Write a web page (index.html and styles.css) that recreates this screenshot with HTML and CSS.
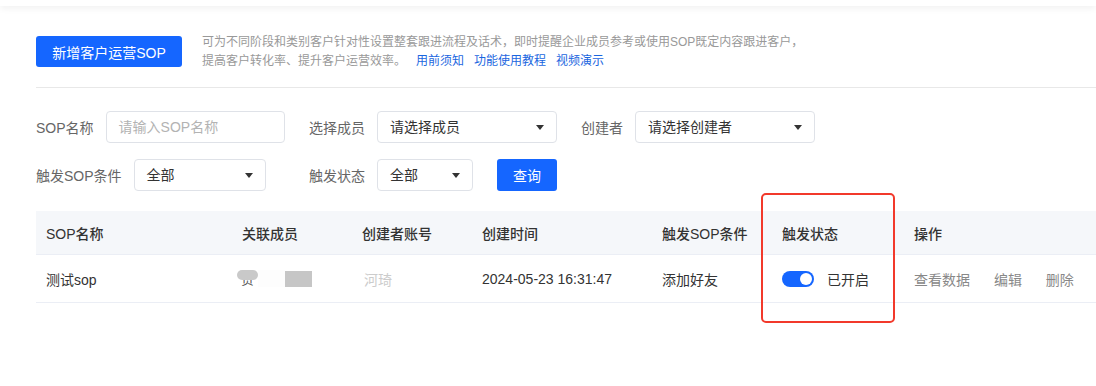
FILE: index.html
```html
<!DOCTYPE html>
<html lang="zh-CN">
<head>
    <meta charset="UTF-8">
    <meta name="viewport" content="width=device-width, initial-scale=1.0">
    <title>客户运营SOP</title>
    <link rel="stylesheet" href="styles.css">
</head>
<body>
    <div class="topbar"></div>

    <div class="page">
        <div class="intro">
            <button class="btn btn-primary btn-add" type="button">新增客户运营SOP</button>
            <div class="intro-desc">
                <div>可为不同阶段和类别客户针对性设置整套跟进流程及话术，即时提醒企业成员参考或使用SOP既定内容跟进客户，</div>
                <div>提高客户转化率、提升客户运营效率。<a href="#" class="link">用前须知</a><a href="#" class="link">功能使用教程</a><a href="#" class="link">视频演示</a></div>
            </div>
        </div>

        <form class="filters">
            <div class="filter-item">
                <label>SOP名称</label>
                <div class="field field-name placeholder">请输入SOP名称</div>
            </div>
            <div class="filter-item">
                <label>选择成员</label>
                <div class="field field-select field-wide">请选择成员<span class="caret"></span></div>
            </div>
            <div class="filter-item">
                <label>创建者</label>
                <div class="field field-select field-wide">请选择创建者<span class="caret"></span></div>
            </div>

            <div class="filter-item">
                <label>触发SOP条件</label>
                <div class="field field-select field-cond">全部<span class="caret"></span></div>
            </div>
            <div class="filter-item">
                <label>触发状态</label>
                <div class="field field-select field-status">全部<span class="caret"></span></div>
                <button class="btn btn-primary btn-query" type="button">查询</button>
            </div>
        </form>

        <div class="table-wrap">
            <table class="sop-table">
                <thead>
                    <tr>
                        <th class="col-name">SOP名称</th>
                        <th class="col-member">关联成员</th>
                        <th class="col-creator">创建者账号</th>
                        <th class="col-time">创建时间</th>
                        <th class="col-cond">触发SOP条件</th>
                        <th class="col-status">触发状态</th>
                        <th>操作</th>
                    </tr>
                </thead>
                <tbody>
                    <tr>
                        <td>测试sop</td>
                        <td>
                            <span class="redact">
                                <span class="redact-char">贺</span><span class="redact-pill"></span>
                            </span><span class="redact-gap"></span><span class="redact-block"></span>
                        </td>
                        <td><span class="faint">河琦</span></td>
                        <td>2024-05-23 16:31:47</td>
                        <td>添加好友</td>
                        <td>
                            <span class="switch is-on"><span class="switch-knob"></span></span>
                            <span class="switch-text">已开启</span>
                        </td>
                        <td class="actions">
                            <a href="#">查看数据</a>
                            <a href="#">编辑</a>
                            <a href="#">删除</a>
                        </td>
                    </tr>
                </tbody>
            </table>
            <!-- 标注框 -->
            <div class="mark-box"></div>
        </div>
    </div>
</body>
</html>
```

FILE: styles.css
```css
body {
    margin: 0;
    font-family: "Liberation Sans", "Noto Sans CJK SC", sans-serif;
    font-size: 14px;
    color: #333;
    background: #fff;
}
a {
    text-decoration: none;
}
.topbar {
    height: 6px;
    background: #fff;
    box-shadow: 0 2px 7px rgba(0, 0, 0, 0.07);
}
.page {
    padding-left: 36px;
    padding-bottom: 84px;
}

/* 顶部说明 */
.intro {
    display: flex;
    align-items: center;
    height: 82px;
    border-bottom: 1px solid #e8e8e8;
    box-sizing: border-box;
    padding-top: 10px;
}
.btn {
    border: none;
    border-radius: 3px;
    font-family: inherit;
    font-size: 14px;
    cursor: pointer;
}
.btn-primary {
    background: #1566ff;
    color: #fff;
}
.btn-add {
    width: 146px;
    height: 31px;
    padding: 0;
    flex-shrink: 0;
}
.intro-desc {
    margin-left: 20px;
    font-size: 12px;
    line-height: 19px;
    color: #999;
}
.link {
    color: #1a66e0;
    margin-left: 10px;
}

/* 筛选 */
.filters {
    display: grid;
    grid-template-columns: 249px 248px auto;
    column-gap: 24px;
    row-gap: 16px;
    margin: 23px 0 0;
}
.filter-item {
    display: flex;
    align-items: center;
    height: 32px;
}
.filter-item label {
    color: #666;
    margin-right: 12px;
    white-space: nowrap;
}
.field {
    position: relative;
    height: 32px;
    line-height: 30px;
    box-sizing: border-box;
    border: 1px solid #dfe2e8;
    border-radius: 4px;
    padding: 0 12px;
    color: #333;
    background: #fff;
}
.placeholder {
    color: #b3b3b3;
}
.field-name {
    width: 180px;
}
.field-wide {
    width: 180px;
}
.field-cond {
    width: 132px;
}
.field-status {
    width: 96px;
}
.caret {
    position: absolute;
    right: 12px;
    top: 13px;
    width: 0;
    height: 0;
    border-left: 4px solid transparent;
    border-right: 4px solid transparent;
    border-top: 5px solid #333;
}
.btn-query {
    width: 60px;
    height: 32px;
    margin-left: 24px;
}

/* 表格 */
.table-wrap {
    position: relative;
    margin-top: 20px;
}
.sop-table {
    width: 100%;
    border-collapse: collapse;
    table-layout: fixed;
}
.sop-table th,
.sop-table td {
    text-align: left;
    padding: 0 10px;
    border-bottom: 1px solid #ebeef5;
    white-space: nowrap;
}
.sop-table th {
    height: 43px;
    background: #f5f7fa;
    font-weight: 500;
    color: #333;
}
.sop-table td {
    height: 47px;
    color: #333;
}
.col-name { width: 176px; }
.col-member { width: 100px; }
.col-creator { width: 100px; }
.col-time { width: 160px; }
.col-cond { width: 100px; }
.col-status { width: 112px; }

/* 打码 */
.redact {
    position: relative;
    display: inline-block;
    vertical-align: middle;
    margin-left: -5px;
    width: 21px;
    height: 17px;
}
.redact-char {
    display: block;
    padding-left: 4px;
    font-size: 13px;
    line-height: 19px;
    color: #555;
}
.redact-pill {
    position: absolute;
    left: 0;
    top: 0;
    width: 21px;
    height: 10px;
    border-radius: 5px;
    background: #c9c9c9;
}
.redact-gap {
    display: inline-block;
    vertical-align: middle;
    width: 27px;
    height: 17px;
    background: #fdfdfd;
}
.redact-block {
    display: inline-block;
    vertical-align: middle;
    width: 27px;
    height: 16px;
    background: #c6c6c6;
}
.faint {
    color: #ccc;
    margin-left: 2px;
}

.switch {
    display: inline-block;
    position: relative;
    width: 32px;
    height: 16px;
    border-radius: 8px;
    background: #1566ff;
    vertical-align: middle;
}
.switch-knob {
    position: absolute;
    top: 2px;
    right: 2px;
    width: 12px;
    height: 12px;
    border-radius: 50%;
    background: #fff;
}
.switch-text {
    margin-left: 9px;
    vertical-align: middle;
}
.actions a {
    color: #888;
    margin-right: 20px;
}
.actions a:last-child {
    margin-right: 0;
}

.mark-box {
    position: absolute;
    left: 725px;
    top: -18px;
    width: 134px;
    height: 130px;
    box-sizing: border-box;
    border: 2px solid #f2392b;
    border-radius: 5px;
}
```
